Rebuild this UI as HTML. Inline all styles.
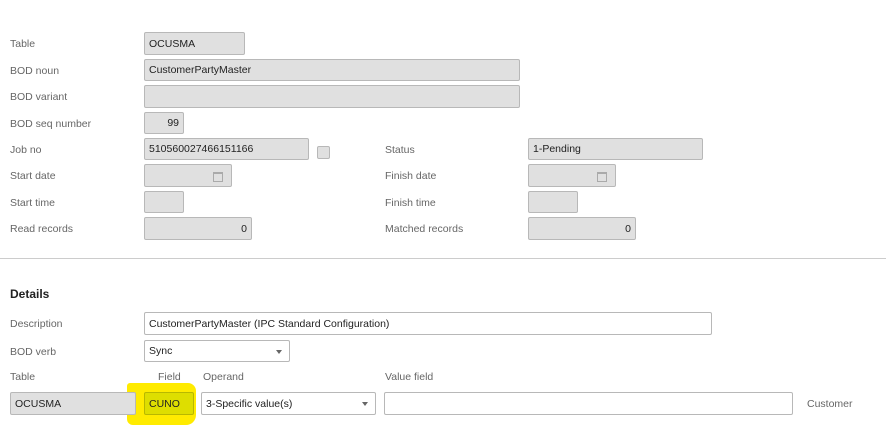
<!DOCTYPE html><html><head><style>
body{margin:0;width:886px;height:445px;background:#fff;font-family:"Liberation Sans",sans-serif;font-size:10.5px;color:#333;position:relative;overflow:hidden}
.l{position:absolute;color:#666;font-size:10.5px}
.b{position:absolute;box-sizing:border-box;background:#e0e0e0;border:1px solid #b8b8b8;border-radius:2px;font-size:10.5px;color:#222;padding:0 4px;display:flex;align-items:center}
.w{background:#fff}
.r{justify-content:flex-end}
.cal{position:absolute;right:8px;top:7px;width:8px;height:7px;border:1px solid #aaa;border-top-width:2px}
.dd{position:absolute;right:7px;top:9px;border-left:3px solid transparent;border-right:3px solid transparent;border-top:4px solid #666}
</style></head><body>
<div class="l" style="left:10px;top:38px">Table</div>
<div class="b" style="left:144px;top:32px;width:101px;height:23px">OCUSMA</div>
<div class="l" style="left:10px;top:65px">BOD noun</div>
<div class="b" style="left:144px;top:59px;width:376px;height:22px">CustomerPartyMaster</div>
<div class="l" style="left:10px;top:91px">BOD variant</div>
<div class="b" style="left:144px;top:85px;width:376px;height:23px"></div>
<div class="l" style="left:10px;top:118px">BOD seq number</div>
<div class="b r" style="left:144px;top:112px;width:40px;height:22px">99</div>
<div class="l" style="left:10px;top:144px">Job no</div>
<div class="b" style="left:144px;top:138px;width:165px;height:22px">510560027466151166</div>
<div class="b" style="left:317px;top:146px;width:13px;height:13px;padding:0"></div>
<div class="l" style="left:385px;top:144px">Status</div>
<div class="b" style="left:528px;top:138px;width:175px;height:22px">1-Pending</div>
<div class="l" style="left:10px;top:170px">Start date</div>
<div class="b" style="left:144px;top:164px;width:88px;height:23px"><span class="cal"></span></div>
<div class="l" style="left:385px;top:170px">Finish date</div>
<div class="b" style="left:528px;top:164px;width:88px;height:23px"><span class="cal"></span></div>
<div class="l" style="left:10px;top:197px">Start time</div>
<div class="b" style="left:144px;top:191px;width:40px;height:22px"></div>
<div class="l" style="left:385px;top:197px">Finish time</div>
<div class="b" style="left:528px;top:191px;width:50px;height:22px"></div>
<div class="l" style="left:10px;top:223px">Read records</div>
<div class="b r" style="left:144px;top:217px;width:108px;height:23px">0</div>
<div class="l" style="left:385px;top:223px">Matched records</div>
<div class="b r" style="left:528px;top:217px;width:108px;height:23px">0</div>
<div style="position:absolute;left:0;top:258px;width:886px;height:1px;background:#ccc"></div>
<div style="position:absolute;left:10px;top:287px;font-weight:bold;font-size:12px;color:#222">Details</div>
<div class="l" style="left:10px;top:318px">Description</div>
<div class="b w" style="left:144px;top:312px;width:568px;height:23px">CustomerPartyMaster (IPC Standard Configuration)</div>
<div class="l" style="left:10px;top:346px">BOD verb</div>
<div class="b w" style="left:144px;top:340px;width:146px;height:22px">Sync<span class="dd"></span></div>
<div class="l" style="left:10px;top:371px">Table</div>
<div class="l" style="left:158px;top:371px">Field</div>
<div class="l" style="left:203px;top:371px">Operand</div>
<div class="l" style="left:385px;top:371px">Value field</div>
<div style="position:absolute;left:127px;top:383px;width:69px;height:42px;background:#ffeb00;border-radius:3px 8px 10px 6px"></div>
<div class="b" style="left:10px;top:392px;width:126px;height:23px">OCUSMA</div>
<div class="b" style="left:144px;top:392px;width:50px;height:23px;background:#dede00;border-color:#b8b800">CUNO</div>
<div class="b w" style="left:201px;top:392px;width:175px;height:23px">3-Specific value(s)<span class="dd"></span></div>
<div class="b w" style="left:384px;top:392px;width:409px;height:23px"></div>
<div class="l" style="left:807px;top:398px">Customer</div>
</body></html>
